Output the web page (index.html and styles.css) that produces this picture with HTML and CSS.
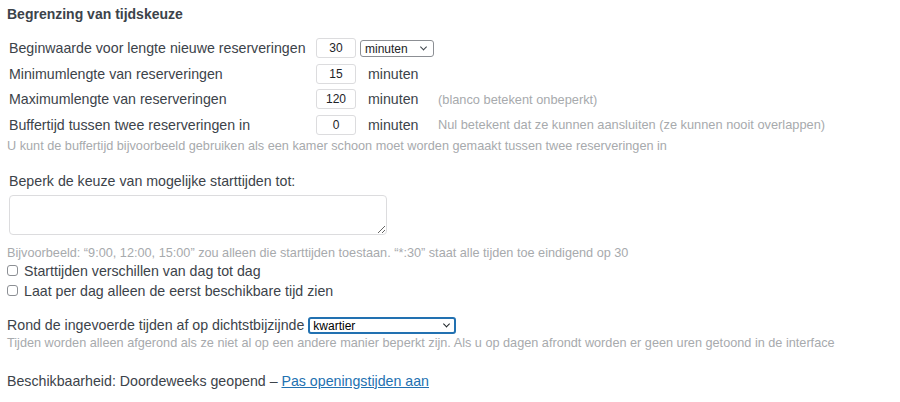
FILE: index.html
```html
<!DOCTYPE html>
<html lang="nl">
<head>
<meta charset="utf-8">
<title>Begrenzing van tijdskeuze</title>
<link rel="stylesheet" href="styles.css">
</head>
<body>
<div class="page">
  <h2 class="title">Begrenzing van tijdskeuze</h2>

  <div class="limits">
    <label class="lbl">Beginwaarde voor lengte nieuwe reserveringen</label>
    <input class="num" type="text" value="30">
    <span class="sel-wrap unit-wrap"><select class="sel unit-select"><option>minuten</option></select></span>
    <span class="note"></span>

    <label class="lbl">Minimumlengte van reserveringen</label>
    <input class="num" type="text" value="15">
    <span class="unit">minuten</span>
    <span class="note"></span>

    <label class="lbl">Maximumlengte van reserveringen</label>
    <input class="num" type="text" value="120">
    <span class="unit">minuten</span>
    <span class="note">(blanco betekent onbeperkt)</span>

    <label class="lbl">Buffertijd tussen twee reserveringen in</label>
    <input class="num" type="text" value="0">
    <span class="unit">minuten</span>
    <span class="note">Nul betekent dat ze kunnen aansluiten (ze kunnen nooit overlappen)</span>
  </div>
  <p class="desc">U kunt de buffertijd bijvoorbeeld gebruiken als een kamer schoon moet worden gemaakt tussen twee reserveringen in</p>

  <div class="starts">
    <label class="starts-label">Beperk de keuze van mogelijke starttijden tot:</label>
    <textarea class="starts-area"></textarea>
  </div>
  <p class="desc">Bijvoorbeeld: “9:00, 12:00, 15:00” zou alleen die starttijden toestaan. “*:30” staat alle tijden toe eindigend op 30</p>
  <label class="check"><input type="checkbox"><span>Starttijden verschillen van dag tot dag</span></label>
  <label class="check"><input type="checkbox"><span>Laat per dag alleen de eerst beschikbare tijd zien</span></label>

  <div class="round">
    <span>Rond de ingevoerde tijden af op dichtstbijzijnde</span>
    <span class="sel-wrap round-wrap"><select class="sel round-select"><option>kwartier</option></select></span>
  </div>
  <p class="desc">Tijden worden alleen afgerond als ze niet al op een andere manier beperkt zijn. Als u op dagen afrondt worden er geen uren getoond in de interface</p>

  <p class="avail">Beschikbaarheid: Doordeweeks geopend – <a href="#">Pas openingstijden aan</a></p>
</div>
</body>
</html>
```

FILE: styles.css
```css
html, body {
  margin: 0;
  padding: 0;
  background: #ffffff;
}

body {
  font-family: "Liberation Sans", Arial, sans-serif;
  font-size: 14.2px;
  color: #3c434a;
}

.page {
  padding: 6px 7px 0 7px;
}

.title {
  margin: 0;
  font-size: 14px;
  font-weight: bold;
  line-height: 17px;
  color: #3c434a;
}

.limits {
  display: grid;
  grid-template-columns: 307px 44px 78px auto;
  grid-auto-rows: 20px;
  row-gap: 5.5px;
  align-items: center;
  margin: 15px 0 0 2px;
}

.lbl {
  line-height: 20px;
  white-space: nowrap;
}

.num {
  box-sizing: border-box;
  width: 40px;
  height: 20px;
  border: 1px solid #dcdcde;
  border-radius: 3px;
  padding: 0 2px;
  font-family: "Liberation Sans", Arial, sans-serif;
  font-size: 12px;
  text-align: center;
  color: #1d2327;
  background: #fff;
}

/* custom selects with thin chevron */
.sel-wrap {
  position: relative;
  display: inline-block;
}

.sel-wrap::after {
  content: "";
  position: absolute;
  top: 50%;
  width: 4px;
  height: 4px;
  border-right: 1px solid #3c434a;
  border-bottom: 1px solid #3c434a;
  transform: translateY(-70%) rotate(45deg);
  pointer-events: none;
}

.sel {
  -webkit-appearance: none;
  appearance: none;
  box-sizing: border-box;
  margin: 0;
  background: #fff;
  font-family: "Liberation Sans", Arial, sans-serif;
  font-size: 12px;
  line-height: 14px;
  color: #1d2327;
}

.unit-wrap {
  width: 74px;
  height: 17px;
}

.unit-wrap::after {
  right: 8px;
}

.unit-select {
  width: 74px;
  height: 17px;
  border: 1px solid #8c8f94;
  border-radius: 3px;
  padding: 0 14px 0 4px;
}

.unit {
  padding-left: 8px;
}

.note {
  font-size: 12.8px;
  color: #a7aaad;
  white-space: nowrap;
}

.desc {
  margin: 0;
  font-size: 12.7px;
  line-height: 16px;
  color: #a7aaad;
  white-space: nowrap;
}

.limits + .desc {
  margin-top: 3px;
}

.starts {
  margin: 19px 0 0 2px;
  display: flex;
  flex-direction: column;
  align-items: flex-start;
}

.starts-label {
  line-height: 17px;
}

.starts-area {
  box-sizing: border-box;
  width: 378px;
  height: 40px;
  margin-top: 5px;
  border: 1px solid #dcdcde;
  border-radius: 4px;
  resize: both;
}

.starts + .desc {
  margin-top: 10px;
}

.check {
  display: flex;
  align-items: center;
  gap: 6px;
  height: 20px;
}

.check input {
  -webkit-appearance: none;
  appearance: none;
  box-sizing: border-box;
  margin: 0;
  width: 11px;
  height: 11px;
  border: 1px solid #8c8f94;
  border-radius: 3px;
  background: #fff;
}

.round {
  display: flex;
  align-items: center;
  gap: 4px;
  margin-top: 16px;
  height: 17px;
}

.round-wrap {
  width: 148px;
  height: 17px;
}

.round-wrap::after {
  right: 7px;
  border-color: #1d2327;
}

.round-select {
  width: 148px;
  height: 17px;
  border: 2px solid #2271b1;
  border-radius: 3px;
  padding: 0 14px 0 3px;
  color: #000;
  outline: none;
}

.round + .desc {
  margin-top: 1px;
}

.avail {
  margin: 22px 0 0 0;
  line-height: 17px;
}

.avail a {
  color: #2271b1;
  text-decoration: underline;
}
```
